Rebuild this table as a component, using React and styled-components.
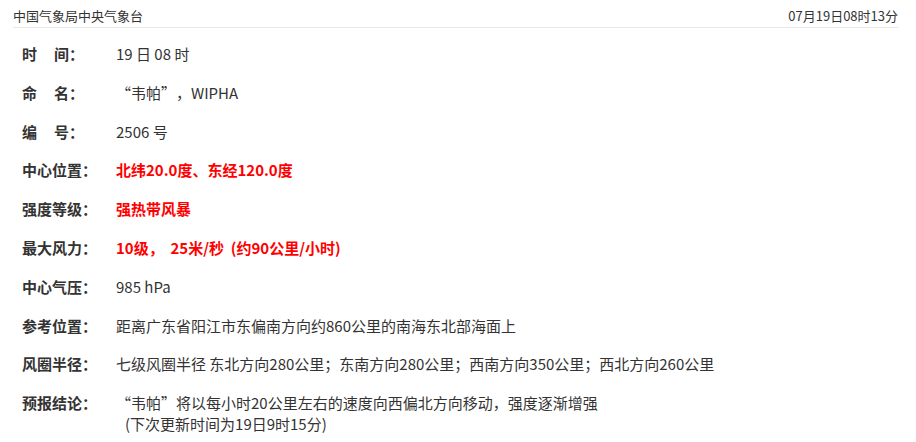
import React from "react";
import styled, { createGlobalStyle } from "styled-components";

const Global = createGlobalStyle`
  html, body { margin: 0; padding: 0; background: #fff; }
  body {
    font-family: "Noto Sans CJK SC", "Noto Sans", sans-serif;
    color: #333;
    text-spacing-trim: space-all;
  }
`;

const Page = styled.div`
  margin: 0 18px 0 13px;
`;

const Header = styled.div`
  height: 28px;
  box-sizing: border-box;
  padding-top: 5px;
  border-bottom: 1px solid #e8e8e8;
  display: flex;
  justify-content: space-between;
  align-items: center;
  font-size: 13px;
  line-height: 20px;
  color: #333;
`;

const List = styled.div`
  padding: 15px 0 0 9px;
  display: flex;
  flex-direction: column;
  gap: 17.8px;
`;

const Row = styled.div`
  display: flex;
  font-size: 15px;
  line-height: 21px;
`;

const Label = styled.div`
  flex: 0 0 94px;
  font-weight: bold;
  color: #333;
  white-space: nowrap;
`;

const Gap = styled.span`
  display: inline-block;
  width: 17px;
`;

const Value = styled.div`
  color: ${(p) => (p.$alert ? "#ff0000" : "#333")};
  font-weight: ${(p) => (p.$alert ? "bold" : "normal")};
  white-space: pre;
`;

const Line = styled.div`
  padding-left: ${(p) => p.$indent || 0}px;
`;

const rows = [
  { label: ["时", "间"], value: "19 日 08 时" },
  { label: ["命", "名"], value: "“韦帕”，WIPHA" },
  { label: ["编", "号"], value: "2506 号" },
  { label: "中心位置", value: "北纬20.0度、东经120.0度", alert: true },
  { label: "强度等级", value: "强热带风暴", alert: true },
  { label: "最大风力", value: "10级，  25米/秒  (约90公里/小时)", alert: true },
  { label: "中心气压", value: "985 hPa" },
  { label: "参考位置", value: "距离广东省阳江市东偏南方向约860公里的南海东北部海面上" },
  {
    label: "风圈半径",
    value: "七级风圈半径 东北方向280公里；东南方向280公里；西南方向350公里；西北方向260公里",
  },
];

export default function App() {
  return (
    <>
      <Global />
      <Page>
        <Header>
          <span>中国气象局中央气象台</span>
          <span>07月19日08时13分</span>
        </Header>
        <List>
          {rows.map((r, i) => (
            <Row key={i}>
              <Label>
                {Array.isArray(r.label) ? (
                  <>
                    {r.label[0]}
                    <Gap />
                    {r.label[1]}：
                  </>
                ) : (
                  <>{r.label}：</>
                )}
              </Label>
              <Value $alert={r.alert}>{r.value}</Value>
            </Row>
          ))}
          <Row>
            <Label>预报结论：</Label>
            <Value>
              <Line>“韦帕”将以每小时20公里左右的速度向西偏北方向移动，强度逐渐增强</Line>
              <Line $indent={9}>(下次更新时间为19日9时15分)</Line>
            </Value>
          </Row>
        </List>
      </Page>
    </>
  );
}
